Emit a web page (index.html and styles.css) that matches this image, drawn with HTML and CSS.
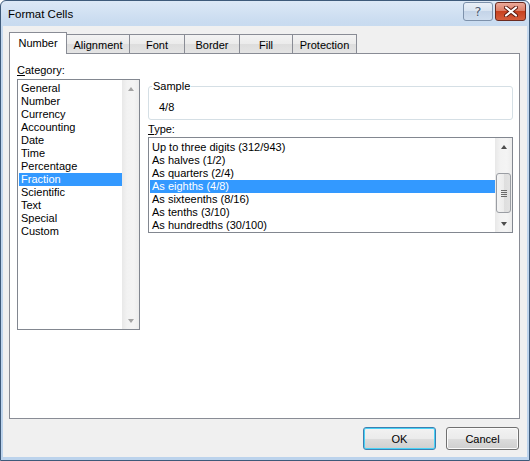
FILE: index.html
```html
<!DOCTYPE html>
<html>
<head>
<meta charset="utf-8">
<link rel="stylesheet" href="styles.css">
</head>
<body>
<div class="window">
  <div class="titlebar">
    <span class="title">Format Cells</span>
    <div class="caption-buttons">
      <div class="cap help">?</div>
      <div class="cap close">
        <svg width="14" height="11" viewBox="0 0 14 11"><path d="M2 1.5 L12 9.5 M12 1.5 L2 9.5" stroke="#5a1a10" stroke-width="4" stroke-linecap="round"/><path d="M2 1.5 L12 9.5 M12 1.5 L2 9.5" stroke="#ffffff" stroke-width="2.2" stroke-linecap="round"/></svg>
      </div>
    </div>
  </div>
  <div class="client">
    <div class="tabs">
      <div class="tab active w-number">Number</div>
      <div class="tab w-align">Alignment</div>
      <div class="tab w-font">Font</div>
      <div class="tab w-border">Border</div>
      <div class="tab w-fill">Fill</div>
      <div class="tab w-prot">Protection</div>
    </div>
    <div class="panel">
      <div class="col-left">
        <div class="label"><u>C</u>ategory:</div>
        <div class="listbox cat">
          <div class="items">
            <div class="item">General</div>
            <div class="item">Number</div>
            <div class="item">Currency</div>
            <div class="item">Accounting</div>
            <div class="item">Date</div>
            <div class="item">Time</div>
            <div class="item">Percentage</div>
            <div class="item sel">Fraction</div>
            <div class="item">Scientific</div>
            <div class="item">Text</div>
            <div class="item">Special</div>
            <div class="item">Custom</div>
          </div>
          <div class="vscroll disabled">
            <div class="arrow"><span class="tri up"></span></div>
            <div class="track"></div>
            <div class="arrow"><span class="tri down"></span></div>
          </div>
        </div>
      </div>
      <div class="col-right">
        <fieldset class="sample">
          <legend>Sample</legend>
          <div class="sample-value">4/8</div>
        </fieldset>
        <div class="label"><u>T</u>ype:</div>
        <div class="listbox type">
          <div class="items">
            <div class="item">Up to three digits (312/943)</div>
            <div class="item">As halves (1/2)</div>
            <div class="item">As quarters (2/4)</div>
            <div class="item sel">As eighths (4/8)</div>
            <div class="item">As sixteenths (8/16)</div>
            <div class="item">As tenths (3/10)</div>
            <div class="item">As hundredths (30/100)</div>
          </div>
          <div class="vscroll">
            <div class="arrow"><span class="tri up"></span></div>
            <div class="track">
              <div class="thumb"><span class="grip"></span></div>
            </div>
            <div class="arrow"><span class="tri down"></span></div>
          </div>
        </div>
      </div>
    </div>
    <div class="buttons">
      <div class="btn default">OK</div>
      <div class="btn">Cancel</div>
    </div>
  </div>
</div>
</body>
</html>
```
FILE: styles.css
```css
* { box-sizing: border-box; }
html, body { margin: 0; padding: 0; background: #ffffff; }
body {
  font-family: "Liberation Sans", Arial, sans-serif;
  font-size: 11px;
  color: #000;
}
.window {
  width: 530px;
  height: 461px;
  border: 1px solid #3e5a7a;
  border-radius: 6px 6px 0 0;
  background: linear-gradient(to bottom, #dce8f6 0px, #cadcf0 20px, #c2d7ee 40px, #bcd3ec 100%);
  padding: 0 2px 3px 2px;
  display: flex;
  flex-direction: column;
}
.titlebar {
  height: 25px;
  display: flex;
  align-items: flex-start;
  justify-content: space-between;
  flex-shrink: 0;
}
.title {
  font-size: 11.5px;
  margin: 7px 0 0 5px;
  color: #000;
}
.caption-buttons {
  display: flex;
  gap: 2px;
  margin: 1px 1px 0 0;
}
.cap {
  width: 30px;
  height: 19px;
  border-radius: 3px;
  display: flex;
  align-items: center;
  justify-content: center;
}
.help {
  border: 1px solid #7d91ab;
  background: linear-gradient(to bottom, #eaf0f8 0%, #d9e4f1 45%, #c4d4e8 50%, #d0deef 100%);
  color: #4a5a70;
  font-family: "DejaVu Sans", sans-serif;
  font-size: 13px;
  text-shadow: 0 0 2px #fff;
}
.close {
  width: 31px;
  border: 1px solid #6b2a1f;
  background: linear-gradient(to bottom, #eaaa9b 0%, #dd7e67 45%, #c8411f 50%, #d55d3d 100%);
}
.client {
  flex: 1;
  background: #f0f0f0;
  padding: 6px 7px 0 6px;
  display: flex;
  flex-direction: column;
}
.tabs {
  display: flex;
  align-items: flex-end;
  height: 21px;
  position: relative;
  z-index: 1;
}
.tab {
  height: 19px;
  border: 1px solid #898c95;
  border-bottom: none;
  margin-right: -1px;
  background: linear-gradient(to bottom, #f3f3f3 0%, #ebebeb 50%, #dddddd 51%, #e4e4e4 100%);
  display: flex;
  align-items: center;
  justify-content: center;
  padding-top: 1px;
}
.tab.active {
  height: 22px;
  margin-bottom: -1px;
  background: #ffffff;
  padding-top: 0;
  padding-bottom: 2px;
}
.w-number { width: 58px; }
.w-align { width: 64px; }
.w-font { width: 56px; }
.w-border { width: 56px; }
.w-fill { width: 54px; }
.w-prot { width: 65px; }
.panel {
  height: 366px;
  border: 1px solid #898c95;
  background: #ffffff;
  display: flex;
  gap: 8px;
  padding: 10px 6px 0 7px;
}
.col-left {
  width: 123px;
  display: flex;
  flex-direction: column;
}
.col-right {
  flex: 1;
  display: flex;
  flex-direction: column;
  padding-top: 16px;
}
.label {
  line-height: 13px;
  height: 13px;
}
.col-left .label { margin-bottom: 2px; }
.listbox {
  border: 1px solid #828790;
  background: #fff;
  display: flex;
}
.listbox.cat { height: 251px; }
.listbox.type { height: 96px; }
.items {
  flex: 1;
  min-width: 0;
}
.cat .items { padding: 2px 0 0 1px; }
.type .items { padding: 3px 0 0 1px; }
.item {
  height: 13px;
  line-height: 13px;
  padding-left: 2px;
  white-space: nowrap;
}
.item.sel {
  background: #3399ff;
  color: #fff;
}
.vscroll {
  width: 17px;
  display: flex;
  flex-direction: column;
  background: linear-gradient(to right, #e8e8e8 0%, #f2f2f2 30%, #f4f4f4 70%, #ececec 100%);
}
.arrow {
  height: 17px;
  display: flex;
  align-items: center;
  justify-content: center;
  flex-shrink: 0;
}
.track {
  flex: 1;
}
.tri {
  width: 0;
  height: 0;
  border-left: 3.5px solid transparent;
  border-right: 3.5px solid transparent;
}
.tri.up { border-bottom: 4px solid #4d4d4d; }
.tri.down { border-top: 4px solid #4d4d4d; }
.disabled .tri.up { border-bottom-color: #a3a3a3; }
.disabled .tri.down { border-top-color: #a3a3a3; }
.thumb {
  margin: 18px 1px 0 1px;
  height: 40px;
  border: 1px solid #9a9da3;
  border-radius: 3px;
  background: linear-gradient(to right, #f4f4f4 0%, #ececec 50%, #dedede 51%, #e2e2e2 100%);
  display: flex;
  align-items: center;
  justify-content: center;
}
.grip {
  width: 6px;
  height: 7px;
  background: repeating-linear-gradient(to bottom, #6a6a6a 0px, #6a6a6a 1px, transparent 1px, transparent 2px);
}
.sample {
  margin: 0;
  padding: 0 0 2px 0;
  min-width: 0;
  border: 1px solid #d5dfe5;
  border-radius: 3px;
  height: 40px;
}
.sample legend {
  margin-left: 3px;
  padding: 0 1px;
  line-height: 13px;
}
.sample-value {
  padding: 8px 0 0 10px;
  line-height: 13px;
}
.col-right .label { margin-top: 3px; margin-bottom: 1px; }
.buttons {
  display: flex;
  justify-content: flex-end;
  gap: 10px;
  margin-top: 8px;
  padding-right: 1px;
}
.btn {
  width: 73px;
  height: 23px;
  border: 1px solid #707070;
  border-radius: 3px;
  background: linear-gradient(to bottom, #f2f2f2 0%, #ebebeb 50%, #dddddd 51%, #cfcfcf 100%);
  box-shadow: inset 0 0 0 1px #fbfbfb;
  display: flex;
  align-items: center;
  justify-content: center;
}
.btn.default {
  border-color: #3c7fb1;
  box-shadow: inset 0 0 0 1px #48d2f6;
}
```
